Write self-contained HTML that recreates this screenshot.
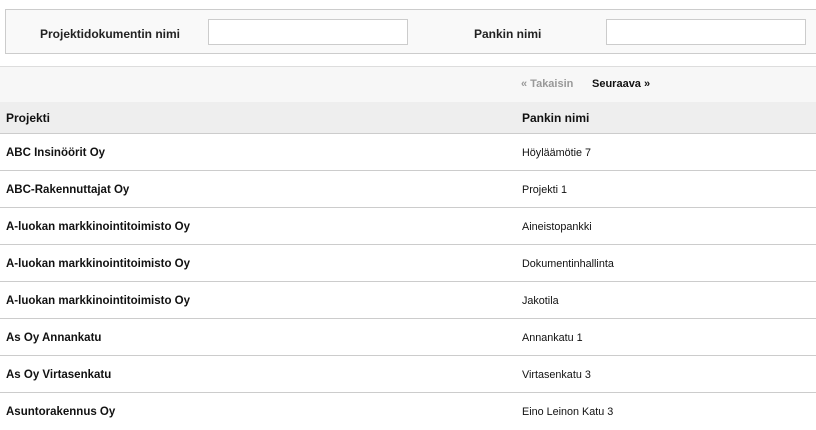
<!DOCTYPE html>
<html><head><meta charset="utf-8"><style>
*{margin:0;padding:0;box-sizing:border-box}
body{width:816px;height:427px;overflow:hidden;background:#fff;font-family:"Liberation Sans",Arial,sans-serif;color:#111;position:relative}
.filter{position:absolute;left:5px;top:9px;width:820px;height:45px;border:1px solid #ccc;background:#f9f9f9}
.lbl{position:absolute;font-size:12px;font-weight:bold;top:27px;color:#222}
.inp{position:absolute;top:19px;width:200px;height:26px;border:1px solid #ccc;background:#fff}
.pag{position:absolute;left:0;top:66px;width:816px;height:36px;background:#f7f7f7;border-top:1px solid #ddd}
.pag span{position:absolute;top:11px;font-size:11px;font-weight:bold}
.hdr{position:absolute;left:0;top:102px;width:816px;height:32px;background:#eee;border-bottom:1px solid #ccc;font-size:12px;font-weight:bold}
.row{position:absolute;left:0;width:816px;height:37px;border-bottom:1px solid #ccc}
.c1{position:absolute;left:6px;font-size:11.5px;font-weight:bold}
.c2{position:absolute;left:522px;font-size:10.8px}
.hdr .c1,.hdr .c2{top:9px;font-size:12px;font-weight:bold}
.row .c1,.row .c2{top:13px}
</style></head><body>
<div class="filter"></div>
<div class="lbl" style="left:40px">Projektidokumentin nimi</div>
<div class="inp" style="left:208px"></div>
<div class="lbl" style="left:474px">Pankin nimi</div>
<div class="inp" style="left:606px"></div>
<div class="pag"><span style="left:521px;color:#999">« Takaisin</span><span style="left:592px;color:#111">Seuraava »</span></div>
<div class="hdr"><span class="c1">Projekti</span><span class="c2">Pankin nimi</span></div>
<div class="row" style="top:134px"><span class="c1">ABC Insinöörit Oy</span><span class="c2">Höyläämötie 7</span></div>
<div class="row" style="top:171px"><span class="c1">ABC-Rakennuttajat Oy</span><span class="c2">Projekti 1</span></div>
<div class="row" style="top:208px"><span class="c1">A-luokan markkinointitoimisto Oy</span><span class="c2">Aineistopankki</span></div>
<div class="row" style="top:245px"><span class="c1">A-luokan markkinointitoimisto Oy</span><span class="c2">Dokumentinhallinta</span></div>
<div class="row" style="top:282px"><span class="c1">A-luokan markkinointitoimisto Oy</span><span class="c2">Jakotila</span></div>
<div class="row" style="top:319px"><span class="c1">As Oy Annankatu</span><span class="c2">Annankatu 1</span></div>
<div class="row" style="top:356px"><span class="c1">As Oy Virtasenkatu</span><span class="c2">Virtasenkatu 3</span></div>
<div class="row" style="top:393px;border-bottom:none"><span class="c1">Asuntorakennus Oy</span><span class="c2">Eino Leinon Katu 3</span></div>
</body></html>
